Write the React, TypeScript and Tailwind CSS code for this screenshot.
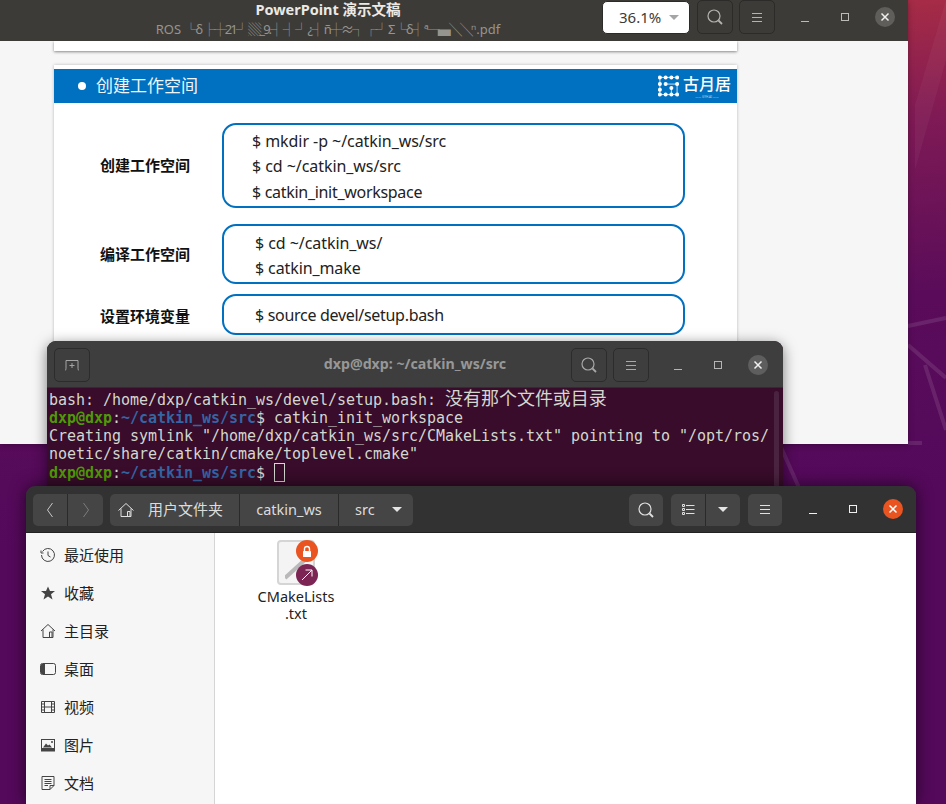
import React from "react";

const ui = { fontFamily: '"Noto Sans","Noto Sans CJK SC",sans-serif' };
const cjk = { fontFamily: '"Open Sans","Noto Sans CJK SC",sans-serif' };
const mono = { fontFamily: '"DejaVu Sans Mono","Noto Sans CJK SC",monospace' };

function Search({ c = "#b5b3af", s = 18 }: { c?: string; s?: number }) {
  return (
    <svg width={s} height={s} viewBox="0 0 18 18" fill="none" stroke={c} strokeWidth="1.2">
      <circle cx="8" cy="8" r="6" />
      <path d="M12.5 12.5L16 16" strokeWidth="1.8" />
    </svg>
  );
}
function Burger({ c = "#b5b3af" }: { c?: string }) {
  return (
    <svg width="12" height="11" viewBox="0 0 12 11" stroke={c} strokeWidth="1">
      <path d="M1 1.5H11M1 5.5H11M1 9.5H11" />
    </svg>
  );
}
function WinControls({ closeBg, closeFg, line }: { closeBg: string; closeFg: string; line: string }) {
  return (
    <div className="flex items-center w-[120px]">
      <div className="w-10 flex justify-center">
        <svg width="14" height="14" viewBox="0 0 14 14" stroke={line} strokeWidth="1"><path d="M3 11.5H11" /></svg>
      </div>
      <div className="w-10 flex justify-center">
        <svg width="14" height="14" viewBox="0 0 14 14" fill="none" stroke={line} strokeWidth="1"><rect x="3.5" y="3.5" width="7" height="7" /></svg>
      </div>
      <div className="w-10 flex justify-center">
        <div className="w-5 h-5 rounded-full flex items-center justify-center" style={{ background: closeBg }}>
          <svg width="10" height="10" viewBox="0 0 10 10" stroke={closeFg} strokeWidth="1.5"><path d="M1.5 1.5L8.5 8.5M8.5 1.5L1.5 8.5" /></svg>
        </div>
      </div>
    </div>
  );
}
function Logo() {
  const pts: [number, number][] = [[2, 2], [8, 2], [14, 2], [20, 2], [2, 9], [8, 9], [20, 9], [2, 15], [2, 20], [8, 20], [14, 20], [20, 20], [14, 13]];
  return (
    <div className="flex items-center gap-[4px] text-white">
      <svg width="21" height="22" viewBox="0 0 22 22" fill="#fff" stroke="#fff" strokeWidth="0.8">
        <path d="M2 2H20M2 2V20M2 20H20M8 9H20V20M14 13V20" fill="none" />
        {pts.map(([x, y], i) => <circle key={i} cx={x} cy={y} r="2.1" stroke="none" />)}
      </svg>
      <div className="flex flex-col items-center w-[48px]">
        <span className="text-[16px] leading-[22px] font-medium" style={cjk}>古月居</span>
        <span className="text-[3px] leading-[4px] opacity-70 whitespace-nowrap">—— GYH.AI ——</span>
      </div>
    </div>
  );
}
function CodeBox({ lines, h, pl, lh, pt }: { lines: [string, string][]; h: string; pl: string; lh: string; pt: string }) {
  return (
    <div className={`w-[463px] ${h} ${pl} ${pt} flex flex-col justify-center border-2 border-[#0070c0] rounded-[14px] text-[16px] text-[#222] ${lh}`} style={ui}>
      {lines.map(([l, t]) => <div key={l} className={t}>{l}</div>)}
    </div>
  );
}
function Slide() {
  const label = "w-[168px] pl-[46px] text-[15px] font-bold text-[#111] shrink-0";
  return (
    <div className="mx-[54px] w-[683px] bg-white mt-[14px] pt-1 shadow-[0_0_3px_rgba(0,0,0,0.25)]">
      <div className="h-[34px] bg-[#0070c0] flex items-center justify-between pl-6 pr-[6px] text-white">
        <div className="flex items-center gap-[10px]">
          <span className="w-2 h-2 rounded-full bg-white" />
          <span className="text-[17px] text-[#eef5fb]" style={cjk}>创建工作空间</span>
        </div>
        <Logo />
      </div>
      <div className="pt-[20px] flex flex-col" style={cjk}>
        <div className="flex items-center">
          <div className={label}>创建工作空间</div>
          <CodeBox h="h-[85px]" pl="pl-[28px]" pt="pt-[3px]" lh="leading-[25.5px]" lines={[["$ mkdir -p ~/catkin_ws/src", "tracking-[-0.06px]"], ["$ cd ~/catkin_ws/src", "tracking-[-0.06px]"], ["$ catkin_init_workspace", "tracking-[-0.3px]"]]} />
        </div>
        <div className="flex items-center mt-[16px]">
          <div className={label}>编译工作空间</div>
          <CodeBox h="h-[60px]" pl="pl-[31px]" pt="pt-[4px]" lh="leading-[25.5px]" lines={[["$ cd ~/catkin_ws/", "tracking-[-0.06px]"], ["$ catkin_make", "tracking-[-0.1px]"]]} />
        </div>
        <div className="flex items-center mt-[10px] pb-[10px]">
          <div className={`${label} pt-[3px]`}>设置环境变量</div>
          <CodeBox h="h-[41px]" pl="pl-[31px]" pt="pt-0" lh="leading-[26px]" lines={[["$ source devel/setup.bash", "tracking-[-0.3px]"]]} />
        </div>
      </div>
    </div>
  );
}
function DocWindow() {
  const tight = "tracking-[-1.95px]";
  return (
    <div className="absolute left-0 top-0 w-[908px] h-[444px] bg-[#f6f6f6] overflow-hidden shadow-[0_1px_6px_rgba(0,0,0,0.3)]">
      <header className="h-[41px] bg-[#3d3b38] flex relative" style={ui}>
        <div className="absolute left-0 w-[656px] top-0 text-center">
          <div className="text-[14.5px] leading-[18px] font-bold text-[#ece9e4]" style={ui}>PowerPoint 演示文稿</div>
          <div className="text-[13px] leading-[18px] mt-[2px] text-[#96948f] whitespace-nowrap">
            ROS <span className={tight}>└δ ├┼21┘ ▒_9.┤ ┤ ┘ ¿┤ ñ┼≈┐ ┌┘ Σ └δ┤ ª─▄╲╲ⁿ</span><span className="ml-[2px]">.pdf</span>
          </div>
        </div>
        <div className="absolute left-[602px] top-[1px] w-[88px] h-[33px] bg-white rounded-[5px] border border-[#2c2b29] flex items-center pl-[16px] text-[15px] text-[#3d3b38]">
          36.1%
          <span className="ml-[8px] w-0 h-0 border-x-[5px] border-x-transparent border-t-[5px] border-t-[#a5a5a5]" />
        </div>
        <div className="absolute left-[697px] top-0 w-9 h-[34px] rounded-[5px] border border-[#2c2b29] flex items-center justify-center"><Search /></div>
        <div className="absolute left-[739px] top-0 w-9 h-[34px] rounded-[5px] border border-[#2c2b29] flex items-center justify-center"><Burger /></div>
        <div className="absolute left-[785px] top-[7px]"><WinControls closeBg="#5f5e5b" closeFg="#f0f0f0" line="#bdbbb7" /></div>
      </header>
      <div className="mx-[54px] w-[683px] h-[10px] bg-white shadow-[0_1px_3px_rgba(0,0,0,0.45)]" />
      <Slide />
    </div>
  );
}
function Terminal() {
  const P = ({ t }: { t: string }) => (
    <>
      <span className="font-bold text-[#4e9a06]">dxp@dxp</span>:<span className="font-bold text-[#3465a4]">{t}</span>$
    </>
  );
  return (
    <div className="absolute left-[47px] top-[341px] w-[736px] h-[150px] rounded-t-[9px] overflow-hidden bg-[#380c2a] shadow-[0_3px_14px_rgba(0,0,0,0.5)]">
      <header className="h-[47px] bg-[#3e3e3e] border-b border-[#2e2e2e] relative" style={ui}>
        <div className="absolute left-[7px] top-[7px] w-9 h-[34px] rounded-[5px] border border-[#2c2c2c] flex items-center justify-center">
          <svg width="16" height="14" viewBox="0 0 16 14" fill="none" stroke="#a5a5a5" strokeWidth="1"><path d="M1 12.5C2 12 2 11 2 9V2.5H14V9C14 11 14 12 15 12.5M8 5V10M5.5 7.5H10.5" /></svg>
        </div>
        <div className="absolute left-0 w-full top-[13px] text-center text-[14.2px] leading-[20px] font-bold text-[#979797]">dxp@dxp: ~/catkin_ws/src</div>
        <div className="absolute left-[524px] top-[7px] w-9 h-[34px] rounded-[5px] border border-[#2c2c2c] flex items-center justify-center"><Search c="#a8a8a8" /></div>
        <div className="absolute left-[566px] top-[7px] w-9 h-[34px] rounded-[5px] border border-[#2c2c2c] flex items-center justify-center"><Burger c="#a8a8a8" /></div>
        <div className="absolute left-[611px] top-[14px]"><WinControls closeBg="#5e5e5e" closeFg="#f0f0f0" line="#b5b5b5" /></div>
      </header>
      <div className="relative pl-[2px] pt-[1px] text-[15px] leading-[18px] text-[#d3d7cf] whitespace-pre tracking-[-0.03px]" style={mono}>
        <div className="h-[20px] leading-[20px]">bash: /home/dxp/catkin_ws/devel/setup.bash: <span className="text-[18px]">没有那个文件或目录</span></div>
        <div><P t="~/catkin_ws/src" /> catkin_init_workspace</div>
        <div>Creating symlink "/home/dxp/catkin_ws/src/CMakeLists.txt" pointing to "/opt/ros/</div>
        <div>noetic/share/catkin/cmake/toplevel.cmake"</div>
        <div className="flex items-center"><span><P t="~/catkin_ws/src" /> </span><span className="w-[11px] h-[19px] border border-[#d3d7cf]" /></div>
        <div className="absolute right-[4px] top-[3px] w-[5px] h-[120px] bg-[#4a2340] rounded-full" />
      </div>
    </div>
  );
}
function I({ d, fill }: { d: string; fill?: boolean }) {
  return (
    <svg width="16" height="16" viewBox="0 0 16 16" fill={fill ? "#444" : "none"} stroke={fill ? "none" : "#444"} strokeWidth="1">
      <path d={d} />
    </svg>
  );
}
const side: [string, React.ReactNode][] = [
  ["最近使用", <I d="M2.5 4.5A6.5 6.5 0 1 1 1.5 8M1 3.5V6H3.5M8 4.5V8.5L10.5 10" />],
  ["收藏", <I fill d="M8 1.5L10 6H15L11 9.2L12.5 14.5L8 11.5L3.5 14.5L5 9.2L1 6H6Z" />],
  ["主目录", <I d="M1 8L8 1.5L15 8M3 6.5V14.5H13V6.5M9.5 14.5V9H12V14.5" />],
  ["桌面", <svg width="16" height="16" viewBox="0 0 16 16"><rect x="0.5" y="2.5" width="15" height="11" rx="2" fill="none" stroke="#444" /><path d="M2 3H5V13H2Q1 13 1 12V4Q1 3 2 3Z" fill="#444" /></svg>],
  ["视频", <I d="M1.5 2.5H14.5V13.5H1.5ZM4.5 2.5V13.5M11.5 2.5V13.5M4.5 8H11.5M1.5 5H4.5M1.5 8H4.5M1.5 11H4.5M11.5 5H14.5M11.5 8H14.5M11.5 11H14.5" />],
  ["图片", <svg width="16" height="16" viewBox="0 0 16 16"><rect x="1" y="2" width="14" height="12.5" fill="#444" /><rect x="2" y="3" width="12" height="8" fill="#f6f6f6" /><path d="M3 10.5L6 6.5L8 8.5L9.5 7.5L12 10.5Z" fill="#444" /><circle cx="12" cy="5" r="1" fill="#444" /></svg>],
  ["文档", <I d="M2 1.5H14V10.5L10 14.5H2ZM14 10.5H10V14.5M4.5 4.5H11.5M4.5 6.5H11.5M4.5 8.5H11.5M4.5 10.5H8" />],
];
function Files() {
  return (
    <div className="absolute left-[26px] top-[486px] w-[890px] h-[318px] rounded-t-[9px] overflow-hidden flex flex-col shadow-[0_0_16px_rgba(0,0,0,0.6)]" style={ui}>
      <header className="h-[47px] shrink-0 bg-[#323232] border-b border-[#222] flex items-center pl-[7px] text-[#dcdcdc] text-[14.5px]">
        <div className="flex h-[32px] rounded-[5px] bg-[#454545] divide-x divide-[#2a2a2a] mt-[1px]">
          <div className="w-[35px] flex items-center justify-center">
            <svg width="8" height="16" viewBox="0 0 8 16" fill="none" stroke="#c8c8c8"><path d="M6.5 1L1.5 8L6.5 15" /></svg>
          </div>
          <div className="w-[35px] flex items-center justify-center">
            <svg width="8" height="16" viewBox="0 0 8 16" fill="none" stroke="#7c7c7c"><path d="M1.5 1L6.5 8L1.5 15" /></svg>
          </div>
        </div>
        <div className="ml-[7px] flex h-[32px] rounded-[5px] bg-[#454545] divide-x divide-[#2a2a2a] items-stretch mt-[1px]">
          <div className="w-[130px] flex items-center pl-[8px] gap-[14px]">
            <svg width="16" height="16" viewBox="0 0 16 16" fill="none" stroke="#e0e0e0"><path d="M0.5 8.5L8 1.5L15.5 8.5M3 6.5V14.5H13V6.5M9.5 14.5V9.5H12V14.5" /></svg>
            <span style={cjk} className="text-[15px]">用户文件夹</span>
          </div>
          <div className="w-[99px] flex items-center justify-center">catkin_ws</div>
          <div className="w-[74px] flex items-center pl-[16px] gap-[17px]">src<span className="w-0 h-0 border-x-[5px] border-x-transparent border-t-[5px] border-t-[#e4e4e4]" /></div>
        </div>
        <div className="ml-auto flex items-center h-[32px] mt-[1px]">
          <div className="w-[34px] h-[32px] rounded-[5px] bg-[#454545] flex items-center justify-center"><Search c="#e0e0e0" /></div>
          <div className="ml-[8px] w-[69px] h-[32px] rounded-[5px] bg-[#454545] flex divide-x divide-[#2a2a2a]">
            <div className="w-[35px] flex items-center justify-center">
              <svg width="13" height="11" viewBox="0 0 13 11" fill="none" stroke="#e0e0e0"><path d="M0.5 0.5H2.5V2.5H0.5ZM0.5 4.5H2.5V6.5H0.5ZM0.5 8.5H2.5V10.5H0.5ZM4 1.5H12.5M4 5.5H12.5M4 9.5H12.5" /></svg>
            </div>
            <div className="flex-1 flex items-center justify-center"><span className="w-0 h-0 border-x-[5px] border-x-transparent border-t-[5px] border-t-[#e4e4e4]" /></div>
          </div>
          <div className="ml-[8px] w-[34px] h-[32px] rounded-[5px] bg-[#454545] flex items-center justify-center"><Burger c="#e0e0e0" /></div>
          <div className="ml-[11px] mr-[3px] -mt-[1px]"><WinControls closeBg="#e95420" closeFg="#fff" line="#f0f0f0" /></div>
        </div>
      </header>
      <div className="flex-1 flex min-h-0 bg-white">
        <aside className="w-[189px] shrink-0 bg-[#f6f6f6] border-r border-[#d5d5d5] pt-[3px] text-[15px] text-[#222]">
          {side.map(([t, ic]) => (
            <div key={t} className="h-[38px] flex items-center pl-[14px] gap-[8px]">
              <span className="w-4 h-4 flex">{ic}</span>
              <span style={cjk}>{t}</span>
            </div>
          ))}
        </aside>
        <main className="flex-1 relative">
          <div className="absolute left-[32px] top-[7px] w-[98px] flex flex-col items-center">
            <div className="relative w-[48px] h-[48px]">
              <div className="absolute left-[5px] top-0 w-[38px] h-[45px] rounded-[4px] bg-[#f4f4f4] border-2 border-[#d5d5d5] overflow-hidden">
                <svg className="absolute left-[6px] top-[12px]" width="26" height="26" viewBox="0 0 26 26" stroke="#b9b9b9" strokeWidth="4"><path d="M0 24L22 4" /></svg>
              </div>
              <div className="absolute left-[24px] top-0 w-[22px] h-[22px] rounded-full bg-[#e95420] flex items-center justify-center">
                <svg width="12" height="13" viewBox="0 0 12 13"><path d="M3.5 6V4A2.5 2.5 0 0 1 8.5 4V6" fill="none" stroke="#fff" strokeWidth="1.4" /><rect x="2" y="6" width="8" height="6" fill="#fff" rx="0.5" /></svg>
              </div>
              <div className="absolute left-[24px] top-[24px] w-[22px] h-[22px] rounded-full bg-[#7c2555] flex items-center justify-center">
                <svg width="12" height="12" viewBox="0 0 12 12" fill="none" stroke="#fff" strokeWidth="1"><path d="M1 11L11 1M4.5 1H11V7.5" /></svg>
              </div>
            </div>
            <div className="text-[14.5px] leading-[17px] text-center text-[#222] w-[90px]">CMakeLists<br />.txt</div>
          </div>
        </main>
      </div>
    </div>
  );
}
function Wallpaper() {
  return (
    <svg className="absolute inset-0" width="946" height="804" viewBox="0 0 946 804">
      <defs>
        <linearGradient id="g" x1="0.85" y1="0" x2="0.9" y2="0.62">
          <stop offset="0" stopColor="#a92d45" />
          <stop offset="0.25" stopColor="#7f1a55" />
          <stop offset="0.6" stopColor="#5a0c5a" />
          <stop offset="1" stopColor="#54095a" />
        </linearGradient>
      </defs>
      <rect width="946" height="804" fill="url(#g)" />
      <path d="M946 0L915 105V170L946 60Z" fill="#ffffff" opacity="0.04" />
      <path d="M908 326L946 318M908 345L946 378M925 365L946 430M908 443H922M780 445L800 490" stroke="#ffffff" strokeOpacity="0.1" strokeWidth="4" fill="none" />
    </svg>
  );
}
export default function App() {
  return (
    <div className="relative w-[946px] h-[804px] overflow-hidden bg-[#54095a]">
      <Wallpaper />
      <DocWindow />
      <Terminal />
      <Files />
    </div>
  );
}
